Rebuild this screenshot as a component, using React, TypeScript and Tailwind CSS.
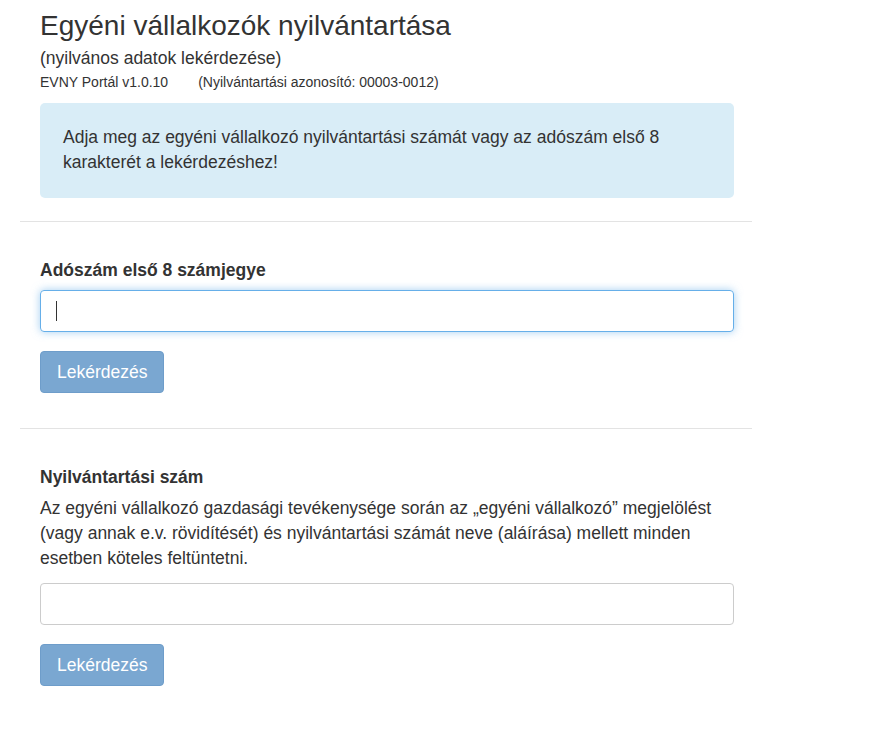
import React from "react";

const Section = ({ children }: { children: React.ReactNode }) => (
  <div className="pl-[20px] pr-[18px]">{children}</div>
);

const QueryButton = () => (
  <button
    type="button"
    disabled
    className="h-[42px] px-[16px] rounded-[4px] border border-[#6e9dca] bg-[#7aa7d1] text-white text-[17.5px] leading-[25px]"
  >
    Lekérdezés
  </button>
);

export default function App() {
  return (
    <div
      className="min-h-screen bg-white text-[#333] text-[17.5px] leading-[25px]"
      style={{ fontFamily: '"Liberation Sans", Arial, sans-serif' }}
    >
      <div className="ml-[20px] w-[732px]">
        <Section>
          <h3 className="pt-[9px] text-[28px] leading-[33px]">Egyéni vállalkozók nyilvántartása</h3>
          <div className="mt-[4px]">(nyilvános adatok lekérdezése)</div>
          <div className="mt-[1px] text-[14px] leading-[20px]">
            <span>EVNY Portál v1.0.10</span>
            <span className="ml-[30px]">(Nyilvántartási azonosító: 00003-0012)</span>
          </div>
          <div className="mt-[11px] rounded-[5px] bg-[#d9edf7] px-[23px] pt-[22px] pb-[23px]">
            Adja meg az egyéni vállalkozó nyilvántartási számát vagy az adószám első 8
            <br />
            karakterét a lekérdezéshez!
          </div>
        </Section>

        <hr className="mt-[23px] border-t border-[#e3e3e3]" />

        <Section>
          <label className="block mt-[36px] font-bold">Adószám első 8 számjegye</label>
          <div className="mt-[7px] h-[42px] rounded-[4px] border border-[#66afe9] shadow-[0_0_8px_rgba(102,175,233,0.6)] flex items-center px-[15px]">
            <span className="block w-px h-[20px] bg-[#333]" />
          </div>
          <div className="mt-[19px]">
            <QueryButton />
          </div>
        </Section>

        <hr className="mt-[35px] border-t border-[#e3e3e3]" />

        <Section>
          <label className="block mt-[36px] font-bold">Nyilvántartási szám</label>
          <p className="mt-[6px]">
            Az egyéni vállalkozó gazdasági tevékenysége során az „egyéni vállalkozó” megjelölést
            <br />
            (vagy annak e.v. rövidítését) és nyilvántartási számát neve (aláírása) mellett minden
            <br />
            esetben köteles feltüntetni.
          </p>
          <input
            type="text"
            className="mt-[12px] block w-full h-[42px] rounded-[4px] border border-[#ccc] px-[15px] outline-none"
          />
          <div className="mt-[19px]">
            <QueryButton />
          </div>
        </Section>
      </div>
    </div>
  );
}
